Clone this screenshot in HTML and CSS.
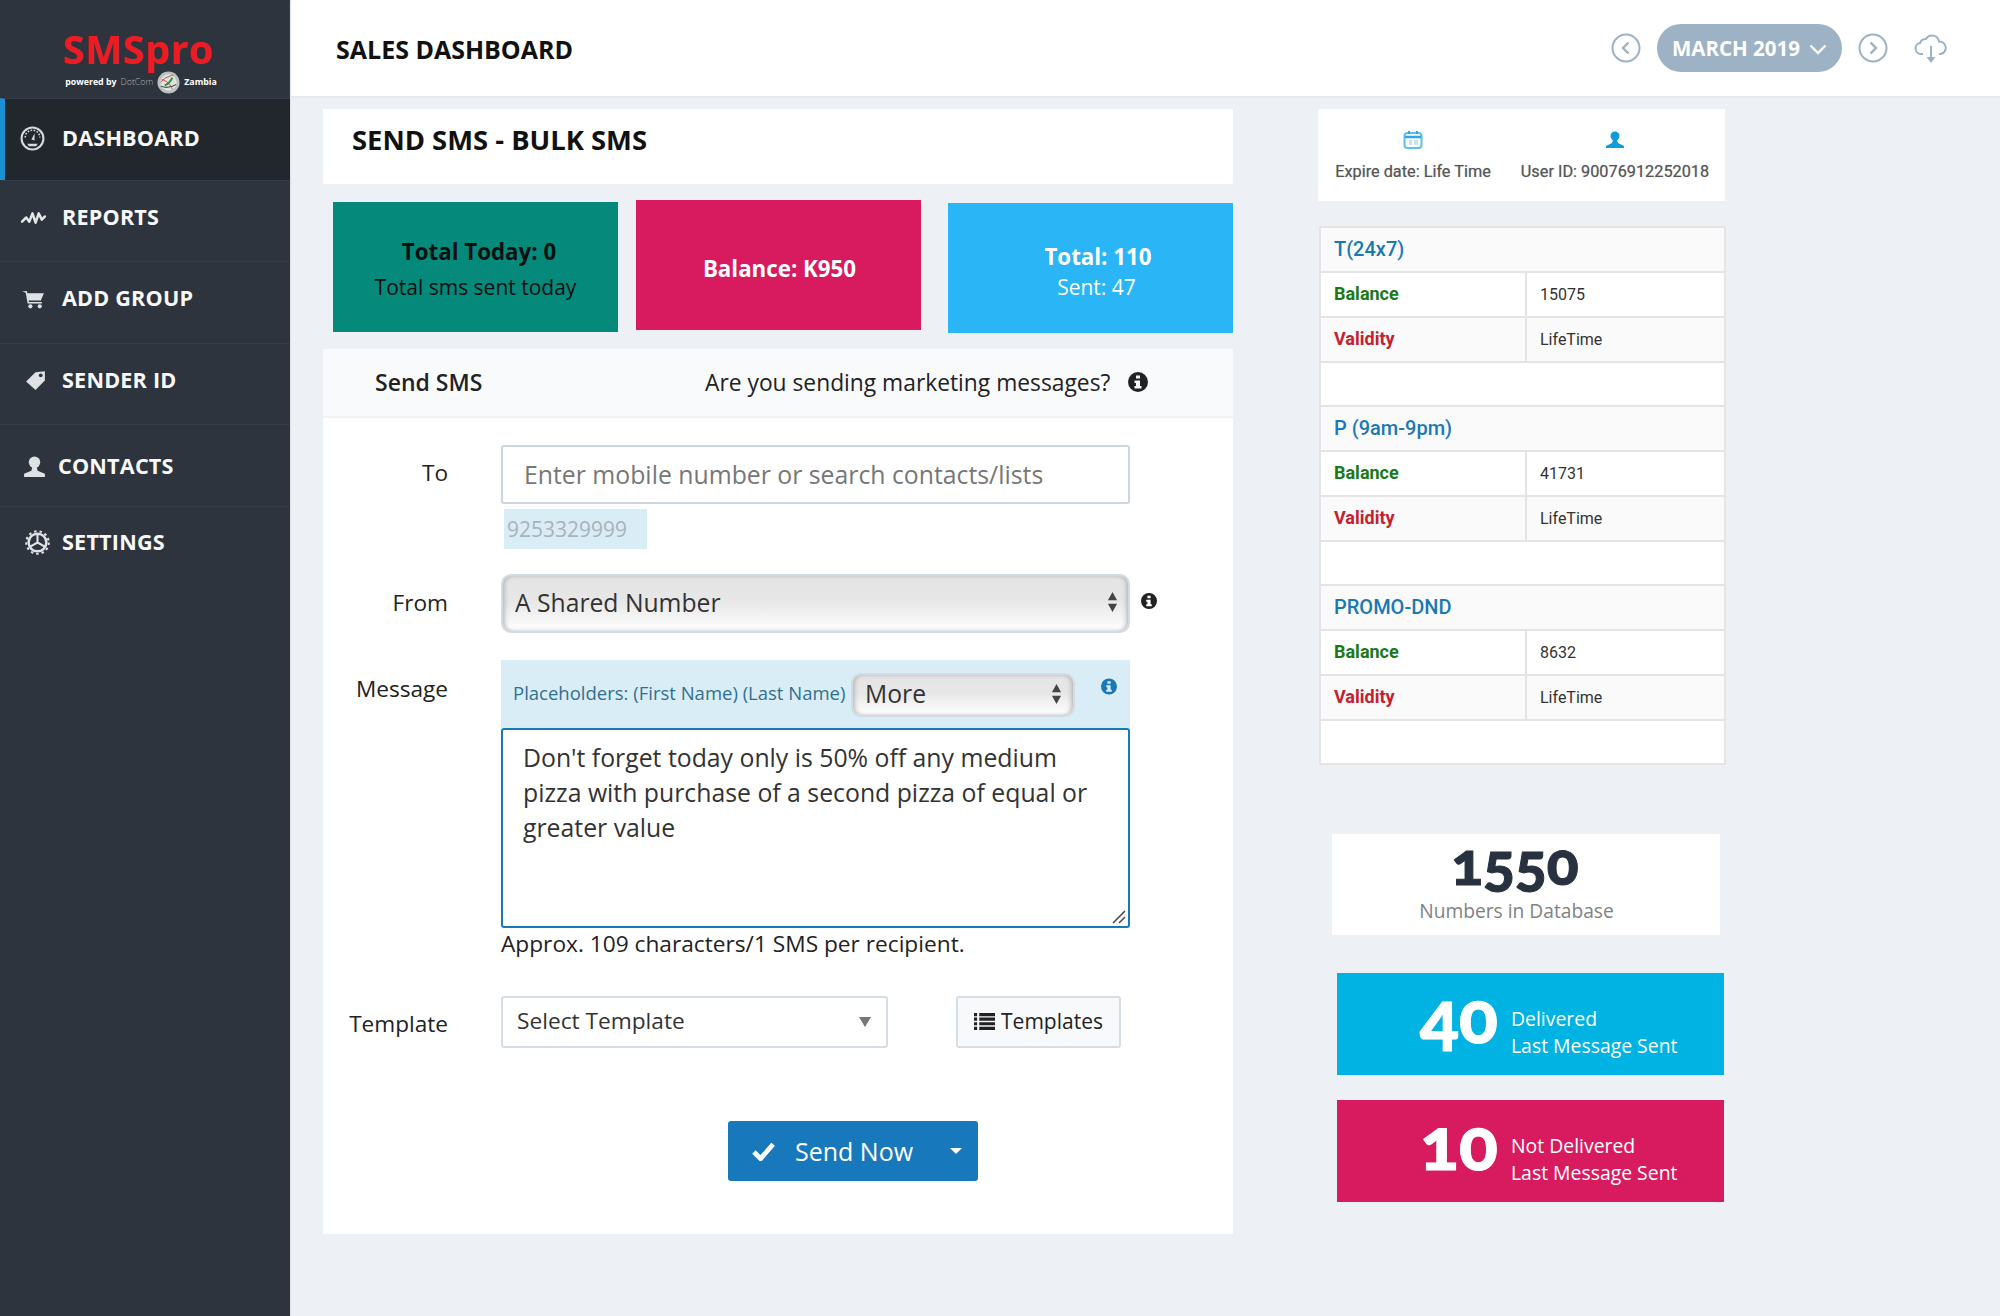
FILE: index.html
```html
<!DOCTYPE html>
<html lang="en">
<head>
<meta charset="utf-8">
<title>SMSpro - Sales Dashboard</title>
<link rel="stylesheet" href="styles.css">
</head>
<body>
<aside class="sidebar">
  <div class="logo">
    <div class="logo-name">SMSpro</div>
    <div class="logo-sub"><b>powered by</b><span class="logo-thin">DotCom</span>
      <svg class="globe" viewBox="0 0 24 24"><circle cx="12" cy="12" r="11.5" fill="#b9c2bf"/><circle cx="12" cy="12" r="8.5" fill="#dfe3de"/><path d="M4 12c4-6 9-6 13-8M5 9c5 1 9 5 11 10" fill="none" stroke="#c0485a" stroke-width="1"/><path d="M8 15c3-1 6-4 8-8" fill="none" stroke="#3a8f3c" stroke-width="2"/><path d="M4 16c5 2 11 1 16-2" fill="none" stroke="#555" stroke-width="1.2"/></svg>
      <b>Zambia</b></div>
  </div>
  <nav class="nav">
    <a class="nav-item active"><svg class="nav-ico" viewBox="0 0 24 24"><circle cx="12" cy="12" r="10.5" fill="none" stroke="#d6d9dc" stroke-width="2"/><path d="M5 11a7 7 0 0 1 14 0" fill="none" stroke="#d6d9dc" stroke-width="1.5" stroke-dasharray="1.6 1.4"/><path d="M11 13l3-6 0 7z" fill="#d6d9dc"/><path d="M7 17h10l-1.500 2.500h-7z" fill="#d6d9dc"/></svg><span>Dashboard</span></a>
    <a class="nav-item nav-reports"><svg class="nav-ico" viewBox="0 0 24 24"><path d="M1 16l4-4 3 4 3-8 3 9 3-9 3 6 3-3" fill="none" stroke="#e4e6e8" stroke-width="2.400" stroke-linejoin="round" stroke-linecap="round"/></svg><span>Reports</span></a>
    <a class="nav-item nav-group"><svg class="nav-ico" viewBox="0 0 24 24"><path d="M1 5h4l2 9h12l3-7H6z" fill="#dfe2e4"/><path d="M5 5l2 11h13" fill="none" stroke="#dfe2e4" stroke-width="1.500"/><circle cx="9" cy="19.500" r="2" fill="#dfe2e4"/><circle cx="18" cy="19.500" r="2" fill="#dfe2e4"/></svg><span>Add Group</span></a>
    <a class="nav-item nav-sender"><svg class="nav-ico" viewBox="0 0 24 24"><path d="M3 13L12 4l9-1v9l-9 9z" fill="#dfe2e4"/><circle cx="17" cy="7" r="1.800" fill="#2d343e"/></svg><span>Sender ID</span></a>
    <a class="nav-item nav-contacts"><svg class="nav-ico" viewBox="0 0 24 24"><circle cx="12" cy="8" r="5.500" fill="#dfe2e4"/><path d="M10 12h4l1 4 7 3v3H2v-3l7-3z" fill="#dfe2e4"/></svg><span>Contacts</span></a>
    <a class="nav-item nav-settings"><svg class="nav-ico" viewBox="0 0 24 24"><circle cx="12" cy="12" r="8.500" fill="none" stroke="#dfe2e4" stroke-width="2.400"/><circle cx="12" cy="12" r="10.800" fill="none" stroke="#dfe2e4" stroke-width="2" stroke-dasharray="2.400 2.850"/><path d="M12 12V4M12 12l7 4M12 12l-7 4" stroke="#dfe2e4" stroke-width="2" fill="none"/></svg><span>Settings</span></a>
  </nav>
</aside>

<div class="page">
  <header class="topbar">
    <h1 class="top-title">SALES DASHBOARD</h1>
    <div class="top-tools">
      <svg class="circle-btn" viewBox="0 0 30 30"><circle cx="15" cy="15" r="13.500" fill="none" stroke="#9db2c4" stroke-width="2"/><path d="M17.500 9.500L12 15l5.500 5.500" fill="none" stroke="#9db2c4" stroke-width="2.400"/></svg>
      <div class="month-pill"><span>MARCH 2019</span><svg class="pill-chev" viewBox="0 0 18 11"><path d="M1.500 1.500L9 9l7.500-7.500" fill="none" stroke="#fff" stroke-width="2.400"/></svg></div>
      <svg class="circle-btn" viewBox="0 0 30 30"><circle cx="15" cy="15" r="13.500" fill="none" stroke="#9db2c4" stroke-width="2"/><path d="M12.500 9.500L18 15l-5.500 5.500" fill="none" stroke="#9db2c4" stroke-width="2.400"/></svg>
      <svg class="cloud" viewBox="0 0 34 32"><path d="M9 22H7a5.500 5.500 0 0 1-1-10.900A6 6 0 0 1 12 7a7 7 0 0 1 13 2.500A6.300 6.300 0 0 1 26.500 22H25" fill="none" stroke="#9db2c4" stroke-width="2"/><path d="M17 14v13" stroke="#9db2c4" stroke-width="2"/><path d="M12.500 25h9L17 31z" fill="#9db2c4"/></svg>
    </div>
  </header>

  <div class="content">
    <main class="left">
      <div class="title-card"><h2>SEND SMS - BULK SMS</h2></div>
      <div class="stats">
        <div class="stat stat-teal"><strong>Total Today: 0</strong><span>Total sms sent today</span></div>
        <div class="stat stat-pink"><strong>Balance: K950</strong></div>
        <div class="stat stat-blue"><strong>Total: 110</strong><span>Sent: 47</span></div>
      </div>

      <section class="panel">
        <div class="panel-head">
          <span class="panel-title">Send SMS</span>
          <span class="panel-q">Are you sending marketing messages?</span>
          <svg class="info info-lg" viewBox="0 0 20 20"><use href="#i-info"/></svg>
        </div>
        <form class="form">
          <div class="row row-to">
            <label class="lbl">To</label>
            <div class="ctl">
              <input class="field" type="text" placeholder="Enter mobile number or search contacts/lists">
              <div class="chip">9253329999</div>
            </div>
          </div>
          <div class="row row-from">
            <label class="lbl">From</label>
            <div class="ctl select-wrap">
              <select class="gsel gsel-big"><option>A Shared Number</option></select>
              <svg class="updown" viewBox="0 0 12 24"><path d="M6 1l5 9H1zM6 23l-5-9h10z" fill="#444"/></svg>
              <svg class="info info-side" viewBox="0 0 20 20"><use href="#i-info"/></svg>
            </div>
          </div>
          <div class="row row-msg">
            <label class="lbl">Message</label>
            <div class="ctl">
              <div class="ph-bar">
                <span class="ph-text">Placeholders: (First Name) (Last Name)</span>
                <div class="select-wrap more-wrap">
                  <select class="gsel gsel-more"><option>More</option></select>
                  <svg class="updown updown-more" viewBox="0 0 12 24"><path d="M6 1l5 9H1zM6 23l-5-9h10z" fill="#444"/></svg>
                </div>
                <svg class="info info-blue" viewBox="0 0 20 20"><use href="#i-info"/></svg>
              </div>
              <div class="msg-wrap">
                <textarea class="msg">Don't forget today only is 50% off any medium pizza with purchase of a second pizza of equal or greater value</textarea>
                <svg class="grip" viewBox="0 0 14 14"><path d="M1 13L13 1M7 13l6-6" stroke="#444" stroke-width="1.500" fill="none"/></svg>
              </div>
              <div class="approx">Approx. 109 characters/1 SMS per recipient.</div>
            </div>
          </div>
          <div class="row row-tpl">
            <label class="lbl lbl-tpl">Template</label>
            <div class="ctl tpl-ctl">
              <div class="tpl-select"><span>Select Template</span><i class="caret-gray"></i></div>
              <button type="button" class="tpl-btn"><svg class="list-ico" viewBox="0 0 20 16"><path d="M0 0h3v3H0zM5 0h15v3H5zM0 4.300h3v3H0zM5 4.300h15v3H5zM0 8.600h3v3H0zM5 8.600h15v3H5zM0 13h3v3H0zM5 13h15v3H5z" fill="#222"/></svg>Templates</button>
            </div>
          </div>
          <div class="send-row">
            <button type="button" class="send"><svg class="check" viewBox="0 0 24 20"><path d="M2 11l7 7L22 3" fill="none" stroke="#fff" stroke-width="5"/></svg><span>Send Now</span><i class="caret-white"></i></button>
          </div>
        </form>
      </section>
    </main>

    <aside class="right">
      <div class="id-card">
        <div class="id-col">
          <svg class="id-ico" viewBox="0 0 20 20"><rect x="1.500" y="3" width="17" height="15" rx="3" fill="none" stroke="#5cc0ee" stroke-width="2"/><path d="M2 7h16" stroke="#29a9e6" stroke-width="2.500"/><path d="M6 1v3M14 1v3" stroke="#29a9e6" stroke-width="2"/><path d="M6 10h3v5H6zM11 10h4v5h-4z" fill="#bfe4f7"/></svg>
          <span>Expire date: Life Time</span>
        </div>
        <div class="id-col">
          <svg class="id-ico" viewBox="0 0 20 20"><circle cx="10" cy="6" r="4.500" fill="#0d9ddb"/><path d="M8 10h4l1 3 6 3v2H1v-2l6-3z" fill="#0d9ddb"/></svg>
          <span>User ID: 90076912252018</span>
        </div>
      </div>

      <table class="plans">
        <colgroup><col class="col-key"><col></colgroup>
        <tr class="plan-h"><th colspan="2">T(24x7)</th></tr>
        <tr><td class="k-bal">Balance</td><td class="v">15075</td></tr>
        <tr class="alt"><td class="k-val">Validity</td><td class="v">LifeTime</td></tr>
        <tr class="blank"><td colspan="2"></td></tr>
        <tr class="plan-h"><th colspan="2">P (9am-9pm)</th></tr>
        <tr><td class="k-bal">Balance</td><td class="v">41731</td></tr>
        <tr class="alt"><td class="k-val">Validity</td><td class="v">LifeTime</td></tr>
        <tr class="blank"><td colspan="2"></td></tr>
        <tr class="plan-h"><th colspan="2">PROMO-DND</th></tr>
        <tr><td class="k-bal">Balance</td><td class="v">8632</td></tr>
        <tr class="alt"><td class="k-val">Validity</td><td class="v">LifeTime</td></tr>
        <tr class="blank"><td colspan="2"></td></tr>
      </table>

      <div class="db-card"><div class="db-num">1550</div><div class="db-lbl">Numbers in Database</div></div>
      <div class="metric metric-blue"><div class="metric-num">40</div><div class="metric-txt">Delivered<br>Last Message Sent</div></div>
      <div class="metric metric-pink"><div class="metric-num">10</div><div class="metric-txt">Not Delivered<br>Last Message Sent</div></div>
    </aside>
  </div>
</div>

<svg class="defs" width="0" height="0"><defs><g id="i-info"><path fill-rule="evenodd" d="M10 0a10 10 0 1 0 0 20a10 10 0 0 0 0-20zM8 3.500h4v3H8zM6.500 8.500H12V14h1.500v2.500h-7V14H8v-3H6.500z" fill="currentColor"/></g></defs></svg>
</body>
</html>
```

FILE: styles.css
```css
* { box-sizing: border-box; }
html, body { margin: 0; height: 100%; }
body {
  display: flex;
  min-height: 1316px;
  background: #edf0f5;
  font-family: "Open Sans", "Liberation Sans", sans-serif;
  color: #222;
  overflow: hidden;
}
.defs { position: absolute; }

/* sidebar */
.sidebar { width: 291px; flex: none; background: #2d343e; border-right: 1px solid #dde1e6; }
.logo { height: 98px; padding-top: 24px; text-align: center; }
.logo-name { font-size: 39.500px; font-weight: 700; line-height: 50px; color: #ed1c24; width: 276px; letter-spacing: .5px; }
.logo-sub { display: flex; align-items: center; justify-content: center; gap: 4px; margin: -4px 0 0 3px; width: 276px; font-size: 8.800px; line-height: 24px; color: #fff; }
.logo-sub b { font-weight: 700; }
.logo-thin { color: #a9afb5; font-weight: 300; }
.globe { width: 23px; height: 23px; }
.nav-item {
  display: flex; align-items: center; height: 81.500px; padding-left: 21px; gap: 16px;
  border-top: 1px solid #343c49; color: #f8f8f8;
  font-size: 21.600px; font-weight: 700; text-transform: uppercase; letter-spacing: .2px;
}
.nav-item span { margin-bottom: 2px; }
.nav-ico { width: 25px; height: 25px; flex: none; }
.active { background: #22272e; border-left: 5px solid #1b8fcf; padding: 0 0 2px 15px; gap: 17px; }
.nav-reports { padding-bottom: 7px; }
.nav-group { padding-bottom: 8px; }
.nav-sender { padding-left: 23px; gap: 14px; padding-bottom: 7px; }
.nav-contacts { padding-left: 22px; gap: 11px; padding-top: 3px; }
.nav-settings { padding-left: 25px; gap: 12px; padding-bottom: 8px; }

/* topbar */
.page { flex: 1; min-width: 0; }
.topbar {
  height: 97px; background: #fff; border-bottom: 1px solid #e5e8ed; box-shadow: 0 1px 2px #e5e8ed;
  display: flex; align-items: center; justify-content: space-between; padding: 0 52px 0 45px;
}
.top-title { margin: 2px 0 0; font-size: 25px; font-weight: 700; color: #111; letter-spacing: 0; }
.top-tools { display: flex; align-items: center; }
.circle-btn { width: 30px; height: 30px; }
.month-pill {
  display: flex; align-items: center; justify-content: center; gap: 9px;
  width: 185px; height: 48px; margin: 0 16px 0 16px; border-radius: 24px;
  background: #9db2c4; color: #fff; font-size: 20.500px; font-weight: 700;
}
.pill-chev { width: 18px; height: 11px; margin-top: 2px; }
.cloud { width: 34px; height: 32px; margin-left: 26px; }

/* layout */
.content { display: flex; align-items: flex-start; padding: 12px 0 0 32px; }
.left { width: 910px; flex: none; }
.right { width: 410px; margin-left: 85px; }

.title-card { height: 75px; background: #fff; padding: 13px 29px; }
.title-card h2 { margin: 0; font-size: 27.400px; line-height: 36px; font-weight: 700; color: #111; }

.stats { display: flex; height: 165px; padding: 16px 0 0 10px; align-items: flex-start; }
.stat {
  width: 285px; height: 130px; display: flex; flex-direction: column; align-items: center; justify-content: center;
  font-size: 21px; line-height: 36px;
}
.stat strong { font-weight: 700; font-size: 22.300px; }
.stat-teal { background: #04897a; color: #0b0f10; margin-top: 2px; padding-top: 3px; }
.stat-teal strong { margin: 1px 0 -1px 7px; }
.stat-pink { background: #d81b5e; color: #fff; margin: 0 0 0 18px; padding: 7px 0 0 2px; }
.stat-blue { background: #29b5f6; color: #fff; margin: 3px 0 0 27px; line-height: 31px; padding: 8px 0 0 12px; }
.stat-blue strong { margin-left: 3px; }

/* panel */
.panel { background: #fff; height: 885px; }
.panel-head {
  height: 69px; background: #f9fafc; border-bottom: 2px solid #f0f2f5;
  display: flex; align-items: center; padding: 0 0 1px 52px; font-size: 22.800px; color: #222;
}
.panel-title { font-weight: 600; width: 330px; font-size: 23px; }
.panel-q { width: 411px; white-space: nowrap; }
.info { display: block; color: #222; }
.info-lg { width: 20px; height: 20px; margin-left: 12px; }

.form { padding-top: 27px; }
.row { display: grid; grid-template-columns: 125px 629px; column-gap: 53px; }
.lbl { text-align: right; font-size: 22.600px; line-height: 30px; color: #222; }
.ctl { position: relative; }
.row-to { height: 129px; }
.row-to .lbl { padding-top: 13px; }
.field {
  display: block; width: 100%; height: 59px; padding: 0 21px 2px;
  border: 2px solid #ccd6e0; border-radius: 3px; outline: none;
  font: 24.800px "Open Sans", sans-serif; color: #222; background: #fff;
}
.field::placeholder { color: #777; opacity: 1; }
.chip {
  width: 143px; height: 40px; margin: 5px 0 0 3px; padding-left: 3px;
  background: #d9edf7; color: #a9b3b8; font-size: 21px; line-height: 40px;
}
.row-from { height: 86px; }
.row-from .lbl { padding-top: 14px; }
.select-wrap { position: relative; }
.gsel {
  display: block; width: 100%; appearance: none; -webkit-appearance: none;
  border: 2px solid #d3dbe4; outline: none; color: #333;
  font-family: "Open Sans", sans-serif;
  background: linear-gradient(#e4e4e4 0, #e7e7e7 45%, #fff 100%);
  box-shadow: inset 3px 0 5px -2px #aaa, inset -3px 0 5px -2px #aaa;
}
.gsel-big { height: 59px; padding: 0 12px 2px; border-radius: 10px; font-size: 24.700px; }
.gsel-more { height: 44px; padding: 0 12px 3px; border-radius: 10px; font-size: 24.700px; }
.updown { position: absolute; right: 12px; top: 16px; width: 11px; height: 24px; }
.updown-more { right: 13px; top: 9px; }
.info-side { position: absolute; left: 640px; top: 18px; width: 16px; height: 18px; }
.row-msg .lbl { padding-top: 14px; }
.ph-bar { display: flex; align-items: center; height: 68px; padding: 4px 0 0 12px; background: #d9edf7; }
.ph-text { width: 338px; padding-bottom: 7px; font-size: 18.500px; color: #31708f; white-space: nowrap; }
.more-wrap { width: 224px; margin-top: -3px; }
.info-blue { width: 16px; height: 17px; margin: -20px 0 0 26px; color: #1a78b8; }
.msg-wrap { position: relative; }
.msg {
  display: block; width: 100%; height: 200px; padding: 10px 20px; margin: 0; resize: none;
  border: 2px solid #1779bb; border-radius: 3px; outline: none;
  font: 24.800px/35px "Open Sans", sans-serif; color: #333; background: #fff;
}
.grip { position: absolute; right: 4px; bottom: 4px; width: 14px; height: 14px; }
.approx { font-size: 22.700px; line-height: 28px; margin-top: 2px; color: #222; }
.row-tpl { margin-top: 38px; }
.lbl-tpl { padding-top: 13px; }
.tpl-ctl { display: flex; height: 52px; }
.tpl-select {
  width: 387px; height: 52px; padding: 0 14px; display: flex; align-items: center; justify-content: space-between;
  border: 2px solid #d6dde4; border-radius: 3px; font-size: 22.700px; color: #333; padding-bottom: 3px;
}
.caret-gray { border: 6px solid transparent; border-top: 10px solid #777; border-bottom: 0; margin: 3px 1px 0 0; }
.tpl-btn {
  width: 165px; height: 52px; margin-left: 68px; display: flex; align-items: center; justify-content: center; gap: 6px;
  border: 2px solid #d6dde4; border-radius: 3px; background: #f8f9fb; color: #222;
  font: 21px "Open Sans", sans-serif; padding: 0 0 2px;
}
.list-ico { width: 21px; height: 17px; }
.send-row { padding: 73px 0 0 405px; }
.send {
  width: 250px; height: 60px; display: flex; align-items: center; padding: 0 0 0 24px; border: 0; border-radius: 3px;
  background: #1779bb; color: #fff; font: 25px "Open Sans", sans-serif;
}
.check { width: 23px; height: 20px; }
.send span { margin-left: 20px; }
.caret-white { border: 6px solid transparent; border-top: 6px solid #fff; border-bottom: 0; margin-left: 37px; }

/* right column */
.id-card { height: 92px; width: 407px; background: #fff; display: flex; padding-top: 21px; margin-bottom: 25px; }
.id-col { display: flex; flex-direction: column; align-items: center; font: 16.300px Roboto, sans-serif; color: #565656; white-space: nowrap; text-shadow: 0 0 1px rgba(0,0,0,.35); }
.id-col:first-child { width: 190px; }
.id-col:last-child { width: 214px; }
.id-ico { width: 20px; height: 20px; margin-bottom: 12px; }
.plans { width: 407px; margin-left: 1px; border-collapse: collapse; table-layout: fixed; background: #fff; font-family: Roboto, sans-serif; }
.col-key { width: 206px; }
.plans th, .plans td { height: 45px; padding: 0 0 2px 13px; border: 2px solid #e4e4e4; }
.plans .blank td { height: 44px; }
.plans th { text-align: left; font-size: 20px; font-weight: 500; color: #1a78b4; background: #fafafa; }
.alt td { background: #fafafa; }
.k-bal { font-size: 18px; font-weight: 700; color: #1a7a1a; }
.k-val { font-size: 18px; font-weight: 700; color: #c5202f; }
.plans .v { font-size: 16px; color: #333; padding-bottom: 0; }
.db-card { width: 388px; height: 101px; margin: 69px 0 0 14px; padding-right: 19px; background: #fff; text-align: center; }
.db-num { font: 900 59px/52px Lato, sans-serif; font-variant-numeric: oldstyle-nums; color: #283140; padding: 3px 3px 0 0; -webkit-text-stroke: 1px #283140; }
.db-lbl { font-size: 19.200px; line-height: 30px; color: #808285; margin-top: 7px; }
.metric {
  width: 387px; height: 102px; margin-left: 19px; color: #fff;
  display: flex; align-items: center; padding-left: 83px;
}
.metric-blue { margin-top: 38px; background: #00b3e3; }
.metric-pink { margin-top: 25px; background: #d81b5e; }
.metric-num { width: 91px; padding-bottom: 18px; font: 900 72px/72px Lato, sans-serif; font-variant-numeric: oldstyle-nums; -webkit-text-stroke: 1px #fff; }
.metric-txt { font-size: 19.400px; line-height: 27px; white-space: nowrap; padding-top: 15px; }
```
